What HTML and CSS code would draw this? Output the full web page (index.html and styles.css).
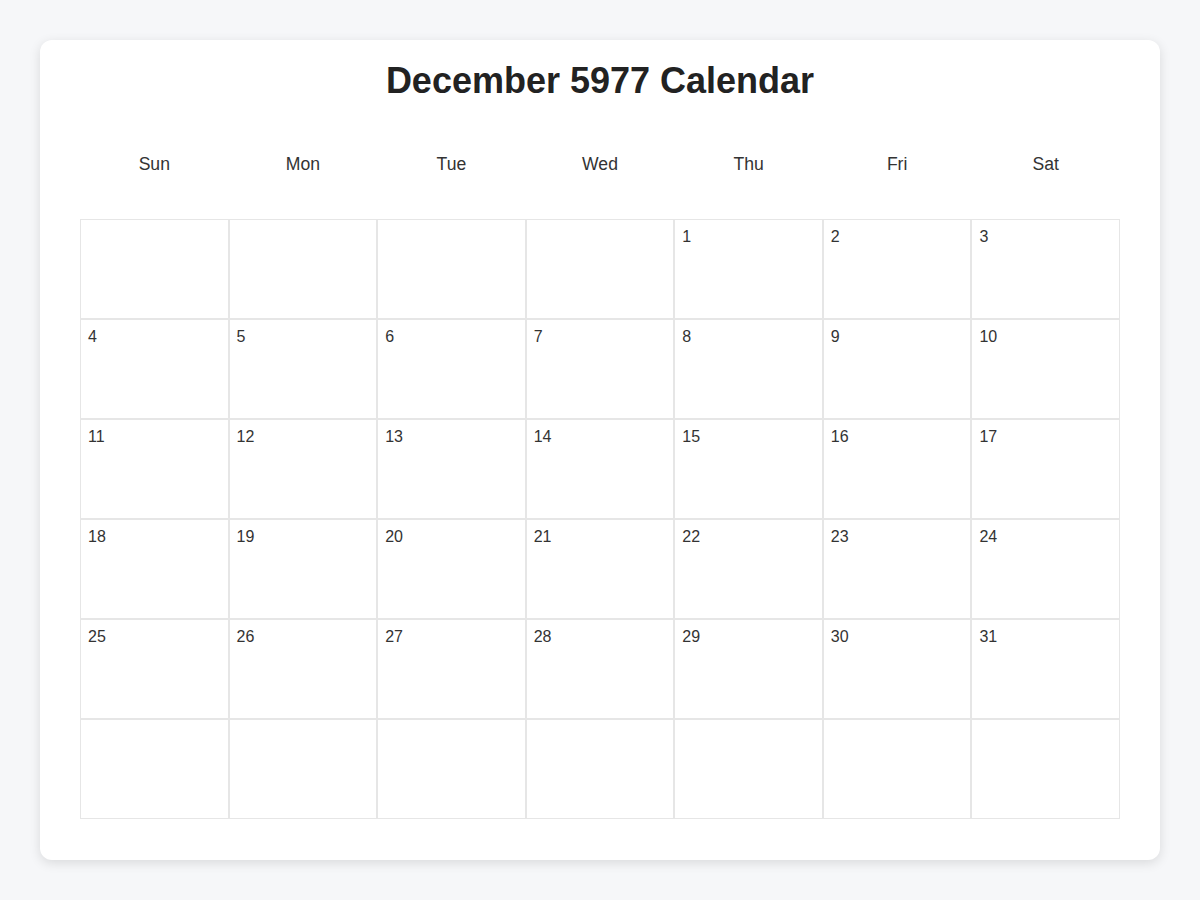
FILE: index.html
```html
<!DOCTYPE html>
<html lang="en">
<head>
<meta charset="utf-8">
<title>December 5977 Calendar</title>
<link rel="stylesheet" href="styles.css">
</head>
<body>
<div class="card">
  <h1 class="title">December 5977 Calendar</h1>
  <div class="weekdays">
    <div class="weekday">Sun</div>
    <div class="weekday">Mon</div>
    <div class="weekday">Tue</div>
    <div class="weekday">Wed</div>
    <div class="weekday">Thu</div>
    <div class="weekday">Fri</div>
    <div class="weekday">Sat</div>
  </div>
  <div class="days">
    <div class="day"></div><div class="day"></div><div class="day"></div><div class="day"></div>
    <div class="day">1</div><div class="day">2</div><div class="day">3</div>
    <div class="day">4</div><div class="day">5</div><div class="day">6</div><div class="day">7</div><div class="day">8</div><div class="day">9</div><div class="day">10</div>
    <div class="day">11</div><div class="day">12</div><div class="day">13</div><div class="day">14</div><div class="day">15</div><div class="day">16</div><div class="day">17</div>
    <div class="day">18</div><div class="day">19</div><div class="day">20</div><div class="day">21</div><div class="day">22</div><div class="day">23</div><div class="day">24</div>
    <div class="day">25</div><div class="day">26</div><div class="day">27</div><div class="day">28</div><div class="day">29</div><div class="day">30</div><div class="day">31</div>
    <div class="day"></div><div class="day"></div><div class="day"></div><div class="day"></div><div class="day"></div><div class="day"></div><div class="day"></div>
  </div>
</div>
</body>
</html>
```
FILE: styles.css
```css
* { box-sizing: border-box; }
html, body { margin: 0; padding: 0; }
body {
  background: #f6f7f9;
  font-family: "Liberation Sans", Arial, sans-serif;
  color: #333;
  padding: 40px;
}
.card {
  background: #fff;
  border-radius: 12px;
  box-shadow: 0 3px 12px rgba(0, 0, 0, 0.12);
  padding: 20px 40px 40px;
  height: 820px;
}
.title {
  margin: 0 0 40px;
  text-align: center;
  font-size: 36px;
  font-weight: bold;
  color: #222;
}
.weekdays {
  display: grid;
  grid-template-columns: repeat(7, 1fr);
  margin-bottom: 32px;
}
.weekday {
  text-align: center;
  font-size: 17.6px;
  padding: 12px 0;
  color: #333;
}
.days {
  display: grid;
  grid-template-columns: repeat(7, 1fr);
  grid-auto-rows: 100px;
}
.day {
  border: 1px solid #e6e6e6;
  padding: 8px 7px;
  font-size: 16px;
  color: #333;
}
```
